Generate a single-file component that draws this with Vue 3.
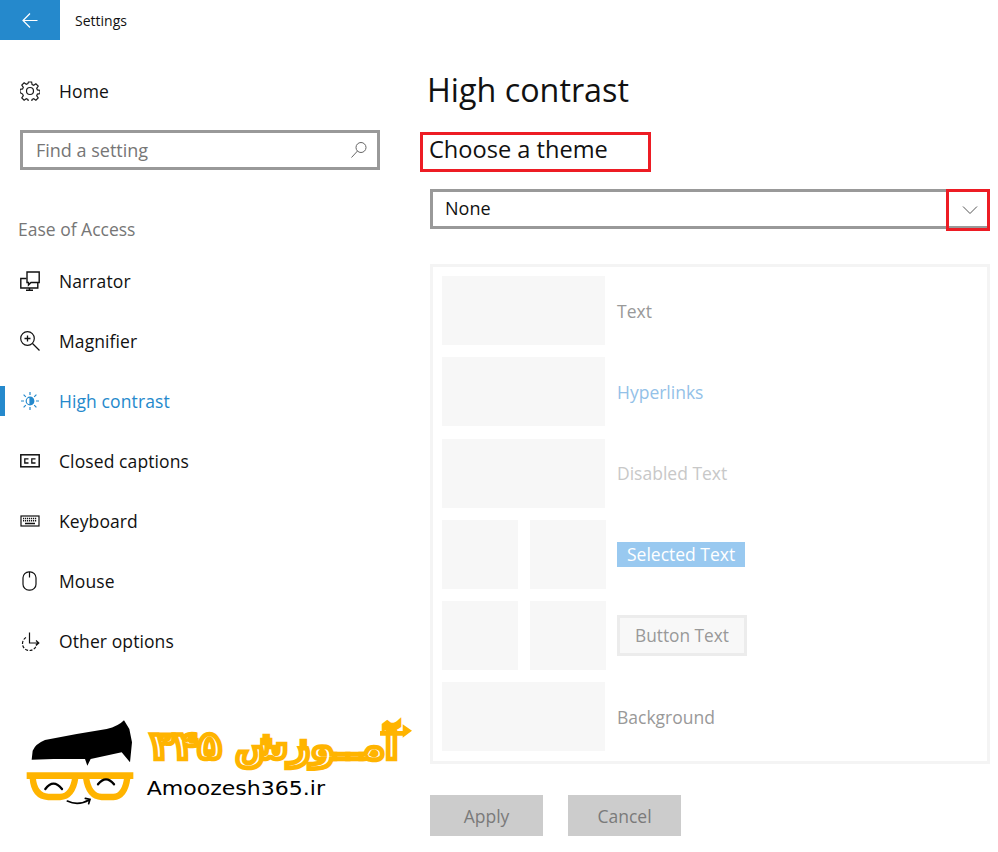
<template>
  <div class="settings">
    <header class="titlebar">
      <button class="back">
        <svg width="18" height="18" viewBox="0 0 18 18" fill="none" stroke="#fff" stroke-width="1.2">
          <path d="M16.5 9.5H2M9 2.5L2 9.5l7 7" />
        </svg>
      </button>
      <span class="app-name">Settings</span>
    </header>

    <div class="content">
      <aside class="sidebar">
        <div class="nav-row home">
          <svg class="nav-icon" viewBox="0 0 20 20" fill="none" stroke="#1a1a1a" stroke-width="1.2">
            <path d="M8.4 1h3.2l.5 2.6 1.6.7 2.2-1.5 2.3 2.3-1.5 2.2.7 1.6 2.6.5v3.2l-2.6.5-.7 1.6 1.5 2.2-2.3 2.3-2.2-1.5-1.6.7-.5 2.6H8.4l-.5-2.6-1.6-.7-2.2 1.5-2.3-2.3 1.5-2.2-.7-1.6L0 11.600V8.400l2.600-.5.7-1.600-1.500-2.200 2.300-2.300 2.200 1.500 1.600-.7z" />
            <circle cx="10" cy="10" r="3.500" />
          </svg>
          <span>Home</span>
        </div>

        <div class="search">
          <span>Find a setting</span>
          <svg width="18" height="18" viewBox="0 0 18 18" fill="none" stroke="#666" stroke-width="1">
            <circle cx="11" cy="6.500" r="5" />
            <path d="M7.500 10L1.500 16.500" />
          </svg>
        </div>

        <div class="group-label">Ease of Access</div>

        <nav class="nav">
          <div v-for="item in navItems" :key="item.label" class="nav-row" :class="{ active: item.active }">
            <svg class="nav-icon" viewBox="0 0 20 20" fill="none" stroke="currentColor" stroke-width="1.200" v-html="item.icon"></svg>
            <span>{{ item.label }}</span>
          </div>
        </nav>

        <svg class="logo" width="410" height="110" viewBox="0 0 1230 330">
          <path d="M65 152L68 125Q76 105 105 93L200 75L290 60Q325 52 342 34L358 60L366 100L360 160L335 130L242 150L232 170L225 150L130 150Z" fill="#000" />
          <g fill="none" stroke="#ffb400" stroke-width="19" stroke-linejoin="round">
            <path d="M50 200H370" stroke-width="20" />
            <path d="M68 205Q72 262 115 264H150Q188 262 196 205" />
            <path d="M228 205Q236 262 275 264H310Q345 262 352 205" />
          </g>
          <g fill="none" stroke="#000" stroke-width="7" stroke-linecap="round">
            <path d="M106 240Q130 208 156 240" />
            <path d="M264 226Q288 196 312 226" />
            <path d="M172 276Q205 292 238 272M226 268L240 271L236 284" stroke-width="5" />
          </g>
          <text class="logo-fa" x="1165" y="150" direction="rtl">آمــوزش ۳۴۵</text>
          <path d="M1110 66H1178V46L1206 65L1178 86V80H1110Z" fill="#ffb400" />
          <text class="logo-en" x="410" y="257" textLength="535" lengthAdjust="spacingAndGlyphs">Amoozesh365.ir</text>
        </svg>
      </aside>

      <main class="main">
        <h1>High contrast</h1>
        <h2 class="red-box">Choose a theme</h2>

        <div class="select">
          <span>None</span>
          <div class="chevron-mark">
            <svg width="16" height="10" viewBox="0 0 16 10" fill="none" stroke="#555" stroke-width="1">
              <path d="M1 1.500L8 8.500L15 1.500" />
            </svg>
          </div>
        </div>

        <section class="preview">
          <div v-for="row in rows" :key="row.label" class="preview-row">
            <div class="swatches">
              <template v-if="row.split"><i></i><i></i></template>
              <i v-else class="wide"></i>
            </div>
            <span :class="row.cls">{{ row.label }}</span>
          </div>
        </section>

        <div class="actions">
          <button>Apply</button>
          <button>Cancel</button>
        </div>
      </main>
    </div>
  </div>
</template>

<script setup>
const navItems = [
  {
    label: 'Narrator',
    icon: '<path d="M6.500 7.500H.8v9.500h17V12" stroke-width="1.400"/><path d="M7 1h12.200v10.500H11l-2.500 2.500v-2.500H7z" fill="#fff" stroke-width="1.400"/><path d="M9.500 17v2M6 19.300h7" stroke-width="1.400"/>'
  },
  {
    label: 'Magnifier',
    icon: '<circle cx="7.500" cy="7.500" r="6.800"/><path d="M12.500 12.500l7 7M4.500 7.500h6M7.500 4.500v6" stroke-width="1.300"/>'
  },
  {
    label: 'High contrast',
    active: true,
    icon: '<circle cx="10" cy="10" r="3.800"/><path d="M10 6.500a3.500 3.500 0 0 1 0 7z" fill="currentColor"/><path d="M10 1v3M10 16v3M1 10h3M16 10h3M3.600 3.600l2.200 2.200M14.200 14.200l2.200 2.200M3.600 16.400l2.200-2.200M14.200 5.800l2.200-2.200"/>'
  },
  {
    label: 'Closed captions',
    icon: '<rect x=".8" y="3.800" width="18.400" height="12" stroke-width="1.500"/><path d="M8.500 7.800H4.800v4.200h3.700M15.500 7.800h-3.700v4.200h3.700" stroke-width="1.300"/>'
  },
  {
    label: 'Keyboard',
    icon: '<rect x="1" y="5" width="18" height="10"/><path d="M3 7.500h14M3 9.800h14" stroke-dasharray="1.200 .8" stroke-width="1.500"/><path d="M5 12.500h10" stroke-width="1.500"/>'
  },
  {
    label: 'Mouse',
    icon: '<rect x="3" y=".8" width="13" height="18.400" rx="6"/><path d="M9.500 1v5.500"/>'
  },
  {
    label: 'Other options',
    icon: '<path d="M6 6.500a7 7 0 1 0 10.500 6" stroke-dasharray="3 1.500"/><path d="M9.500 1.500v10.500h9M16 9.500l2.800 2.500-2.800 2.500"/>'
  }
]

const rows = [
  { label: 'Text', cls: 'label' },
  { label: 'Hyperlinks', cls: 'label link' },
  { label: 'Disabled Text', cls: 'label disabled' },
  { label: 'Selected Text', cls: 'selected', split: true },
  { label: 'Button Text', cls: 'button-text', split: true },
  { label: 'Background', cls: 'label' }
]
</script>

<style>
body {
  background: #fff;
}
</style>

<style scoped>
.settings {
  width: 998px;
  height: 852px;
  overflow: hidden;
  font-family: "Open Sans", "Noto Sans", sans-serif;
  color: #111;
}

.titlebar {
  display: flex;
  align-items: center;
  height: 40px;
}

.back {
  display: flex;
  align-items: center;
  justify-content: center;
  width: 60px;
  height: 40px;
  padding: 0;
  border: none;
  background: #2589cc;
}

.app-name {
  margin-left: 15px;
  font-size: 14px;
}

.content {
  display: flex;
}

.sidebar {
  width: 430px;
  flex-shrink: 0;
}

.nav-row {
  display: flex;
  align-items: center;
  gap: 19px;
  box-sizing: border-box;
  height: 60px;
  padding: 0 0 0 20px;
  font-size: 17.500px;
  letter-spacing: 0.1px;
  color: #111;
  position: relative;
}

.nav-icon {
  width: 20px;
  height: 20px;
  flex-shrink: 0;
  margin-top: -1px;
}

.home {
  height: 30px;
  margin-top: 36px;
}

.search {
  display: flex;
  align-items: center;
  justify-content: space-between;
  box-sizing: border-box;
  width: 360px;
  height: 40px;
  margin: 24px 0 0 20px;
  padding: 0 9px 0 13px;
  border: 3px solid #999;
  font-size: 18px;
  color: #767676;
}

.group-label {
  margin: 47px 0 0 18px;
  font-size: 17.500px;
  line-height: 24px;
  color: #767676;
}

.nav {
  margin-top: 10px;
}

.nav-row.active {
  color: #2589cc;
}

.nav-row.active::before {
  content: "";
  position: absolute;
  left: 0;
  top: 15px;
  width: 5px;
  height: 30px;
  background: #2589cc;
}

.logo {
  display: block;
  margin: 38px 0 0 10px;
}

.logo-fa {
  font-family: "DejaVu Sans", sans-serif;
  font-size: 116px;
  font-weight: 700;
  fill: #fff;
  stroke: #ffb400;
  stroke-width: 14px;
}

.logo-en {
  font-family: "DejaVu Sans", sans-serif;
  font-size: 60px;
  fill: #000;
}

.main {
  flex: 1;
  padding-right: 8px;
}

h1 {
  margin: 24px 0 0 -3px;
  font-size: 32.300px;
  line-height: 50px;
  font-weight: 400;
  color: #111;
}

.red-box {
  box-sizing: border-box;
  width: 231px;
  height: 40px;
  margin: 18px 0 0 -10px;
  padding-left: 6px;
  border: 3px solid #ed1c24;
  font-size: 23.600px;
  line-height: 29px;
  font-weight: 400;
  color: #111;
}

.select {
  display: flex;
  align-items: center;
  box-sizing: border-box;
  height: 40px;
  margin-top: 17px;
  padding: 0 0 3px 12px;
  border: 3px solid #999;
  font-size: 18px;
  position: relative;
}

.chevron-mark {
  position: absolute;
  right: -3px;
  top: -3px;
  display: flex;
  align-items: center;
  justify-content: center;
  box-sizing: border-box;
  width: 44px;
  height: 42px;
  padding-left: 4px;
  border: 3px solid #ed1c24;
}

.preview {
  display: flex;
  flex-direction: column;
  gap: 12.300px;
  box-sizing: border-box;
  height: 500px;
  margin-top: 35px;
  padding: 9px;
  border: 3px solid #f4f4f4;
}

.preview-row {
  display: flex;
  align-items: center;
  height: 69px;
  gap: 11px;
}

.swatches {
  display: flex;
  gap: 12px;
  width: 164px;
}

.swatches i {
  display: block;
  flex: 1;
  height: 69px;
  background: #f7f7f7;
}

.swatches .wide {
  flex: none;
  width: 163px;
}

.label {
  font-size: 17.500px;
  color: #999;
}

.link {
  color: #93c1e8;
}

.disabled {
  color: #c8c8c8;
}

.selected {
  display: block;
  box-sizing: border-box;
  width: 128px;
  height: 25px;
  padding-left: 10px;
  font-size: 17.500px;
  line-height: 25px;
  color: #fff;
  background: #99c9f0;
}

.button-text {
  box-sizing: border-box;
  width: 130px;
  height: 41px;
  border: 3px solid #ececec;
  font-size: 17.300px;
  line-height: 35px;
  text-align: center;
  color: #999;
  background: #f8f8f8;
}

.actions {
  display: flex;
  gap: 25px;
  margin-top: 31px;
}

.actions button {
  width: 113px;
  height: 41px;
  padding: 0;
  border: none;
  font-family: inherit;
  font-size: 17.500px;
  color: #7a7a7a;
  background: #ccc;
}
</style>
